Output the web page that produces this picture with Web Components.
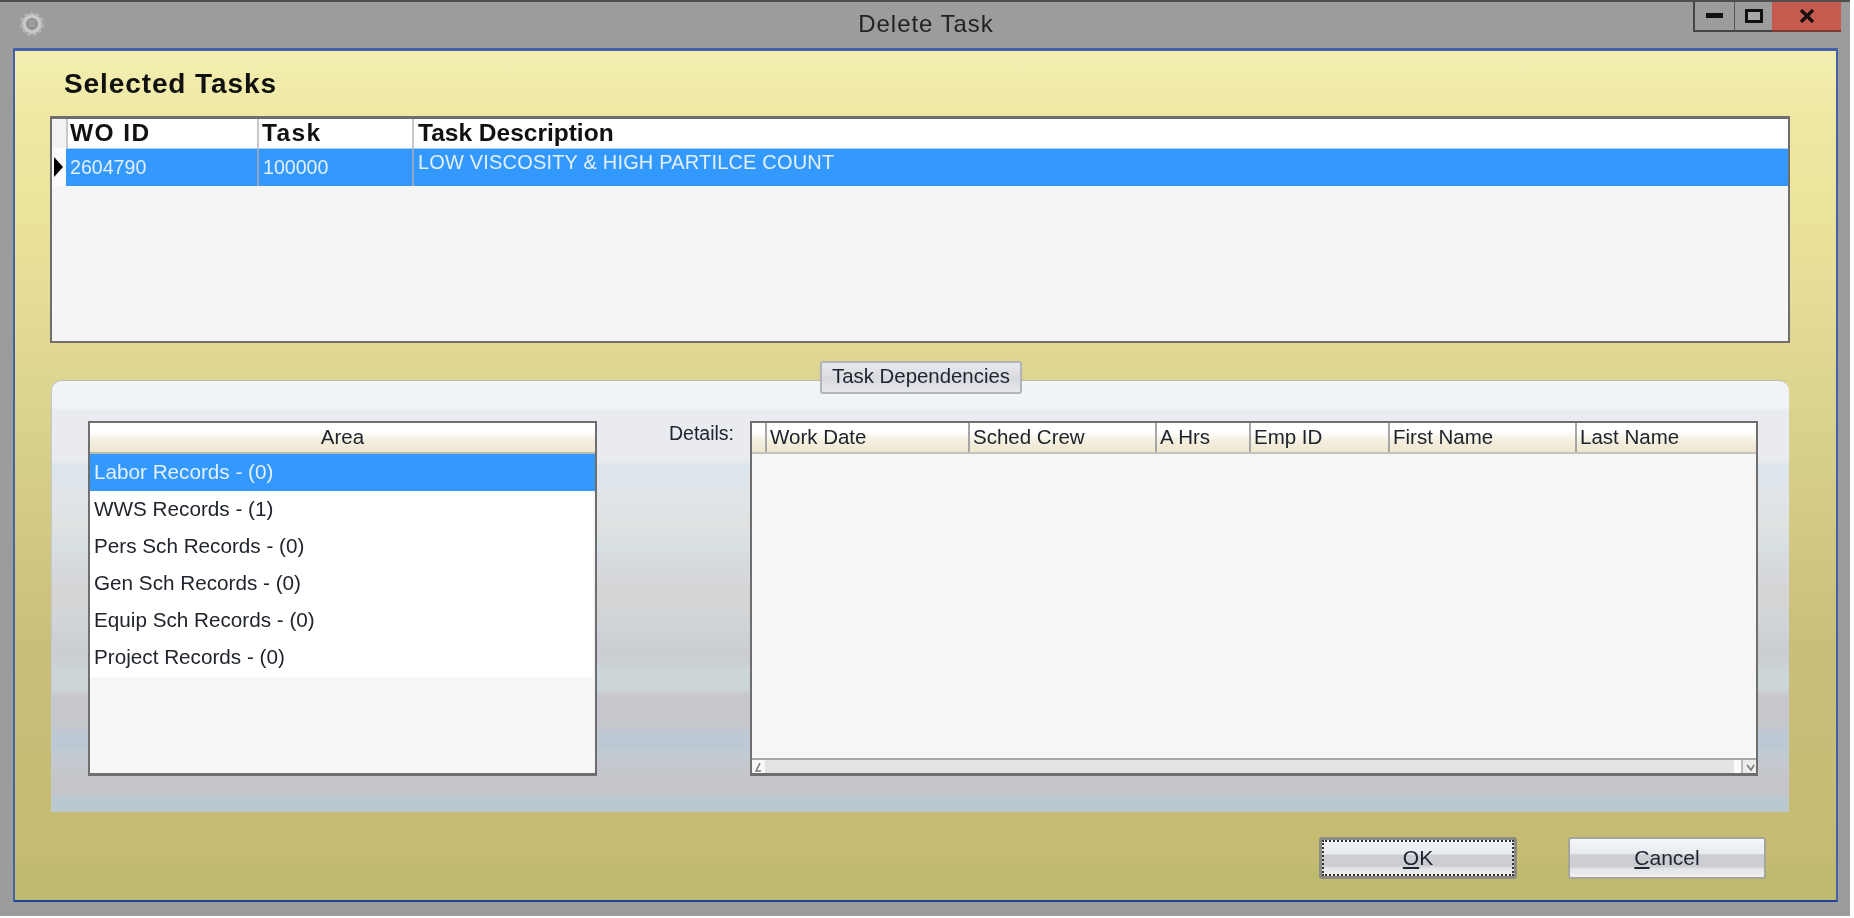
<!DOCTYPE html>
<html>
<head>
<meta charset="utf-8">
<title>Delete Task</title>
<style>
  html, body { margin: 0; height: 100%; background: #fff; overflow: hidden; }
  body { font-family: "Liberation Sans", Arial, sans-serif; }
</style>
</head>
<body>

<win-dialog caption="Delete Task">
  <section-title>Selected Tasks</section-title>
  <tasks-grid></tasks-grid>
  <dep-group label="Task Dependencies">
    <area-list></area-list>
    <details-grid></details-grid>
  </dep-group>
  <button-row>
    <win-button focused><u>O</u>K</win-button>
    <win-button><u>C</u>ancel</win-button>
  </button-row>
</win-dialog>

<script>
// window chrome: caption bar + the yellow client area
class WinDialog extends HTMLElement {
  constructor() {
    super();
    const r = this.attachShadow({ mode: 'open' });
    r.innerHTML = `<style>
      :host { display: flex; flex-direction: column; width: 1850px; height: 916px; box-sizing: border-box;
        background: #9c9c9c; border-top: 2px solid #4e4e4e; filter: blur(.45px); }
      .bar { height: 46px; display: flex; align-items: flex-start; position: relative; flex: none; }
      .icon { margin: 9px 0 0 19px; width: 26px; height: 26px; }
      .title { position: absolute; left: 0; right: 0; top: 9px; text-align: center; padding-left: 2px;
        font-size: 24px; letter-spacing: .95px; line-height: 26px; color: #222; }
      .ctl { margin-left: auto; margin-right: 9px; display: flex; height: 30px; }
      .ctl div { display: flex; align-items: center; justify-content: center; box-sizing: border-box; height: 30px; }
      .min { width: 42px; border-left: 2px solid #444; border-bottom: 2px solid #444; border-right: 1px solid #555; }
      .max { width: 37px; border-bottom: 2px solid #444; }
      .cls { width: 69px; background: #c65a4e; border-bottom: 2px solid #7c3a32; }
      .client { flex: 1; margin: 0 12px 14px 13px; border: 2px solid #4761a6; border-top-width: 3px;
        border-bottom-color: #24409a; display: flex; flex-direction: column; min-height: 0;
        background: linear-gradient(#f2efb1 0, #efe7a2 9%, #ede49b 18%, #dfd592 38%, #d7cd8a 50%, #c9bf79 70%, #c7bd76 82%, #c5bb72 95.8%, #bebb6f 96%, #bebb6f 100%); }
    </style>
    <div class="bar">
      <svg class="icon" viewBox="0 0 26 26">
        <circle cx="13" cy="13" r="8" fill="none" stroke="#c9c9c9" stroke-width="4"/>
        <circle cx="13" cy="13" r="10.5" fill="none" stroke="#b4b4b4" stroke-width="3" stroke-dasharray="3.5 2.4"/>
        <circle cx="13" cy="13" r="5" fill="#9c9c9c" stroke="#858585" stroke-width="1"/>
      </svg>
      <div class="title"></div>
      <div class="ctl">
        <div class="min"><svg width="18" height="6"><rect y="0" width="17" height="5" fill="#111"/></svg></div>
        <div class="max"><svg width="18" height="14"><rect x="1.5" y="1.5" width="15" height="11" fill="#a8a8a8" stroke="#111" stroke-width="3"/></svg></div>
        <div class="cls"><svg width="16" height="14" viewBox="0 0 16 14"><path d="M2 1 L14 13 M14 1 L2 13" stroke="#1a1010" stroke-width="3.4" fill="none"/></svg></div>
      </div>
    </div>
    <div class="client"><slot></slot></div>`;
    r.querySelector('.title').textContent = this.getAttribute('caption') || '';
  }
}

class SectionTitle extends HTMLElement {
  constructor() {
    super();
    this.attachShadow({ mode: 'open' }).innerHTML = `<style>
      :host { display: block; height: 65px; box-sizing: border-box; padding: 18px 0 0 49px;
        font-size: 28px; font-weight: bold; line-height: 30px; letter-spacing: .9px; color: #111; }
    </style><slot></slot>`;
  }
}

// top table with the one selected row
class TasksGrid extends HTMLElement {
  constructor() {
    super();
    this.attachShadow({ mode: 'open' }).innerHTML = `<style>
      :host { display: block; margin: 0 46px 37px 35px; height: 227px; box-sizing: border-box;
        border: 2px solid #6e6e6e; border-top-width: 3px; background: #f5f5f5; color: #111; }
      .row { display: grid; grid-template-columns: 14px 191px 155px 1fr; }
      .head { height: 29px; background: #fff; font-size: 24.5px; font-weight: bold; line-height: 28px; }
      .head div { padding-left: 3px; border-left: 2px solid #c8c8c8; box-sizing: border-box; white-space: nowrap; }
      .head div:first-child { background: #f2f2f2; border: 0; padding: 0; }
      .head .wo { letter-spacing: 1.4px; padding-left: 2px; }
      .head .tk { letter-spacing: 1.4px; }
      .head .ds { padding-left: 4px; }
      .sel { height: 38px; font-size: 19.6px; color: #e4f0ff; }
      .sel div { background: #3399ff; border-left: 2px solid #8fa9c4; box-sizing: border-box; padding: 6px 0 0 4px; line-height: 24px; white-space: nowrap; border-top: 1px solid #a8d0f8; }
      .sel div.rh { background: #fbfbfb; border: 0; padding: 0 0 0 1px; display: flex; align-items: center; }
      .sel div:nth-child(2) { border-left: 0; }
      .sel div.desc { font-size: 20px; padding-top: 1px; line-height: 25px; letter-spacing: .18px; }
      svg { display: block; }
    </style>
    <div class="row head"><div></div><div class="wo">WO ID</div><div class="tk">Task</div><div class="ds">Task Description</div></div>
    <div class="row sel">
      <div class="rh"><svg width="11" height="20"><path d="M1 0 L10 10 L1 20 Z" fill="#000"/></svg></div>
      <div>2604790</div><div>100000</div><div class="desc">LOW VISCOSITY &amp; HIGH PARTILCE COUNT</div>
    </div>`;
  }
}

// light rounded panel, the label sits over its top edge
class DepGroup extends HTMLElement {
  constructor() {
    super();
    const r = this.attachShadow({ mode: 'open' });
    r.innerHTML = `<style>
      :host { display: flex; position: relative; margin: 0 47px 0 36px; height: 432px; box-sizing: border-box;
        padding: 40px 31px 36px 36px; justify-content: space-between; border-radius: 10px 10px 0 0;
        border-top: 1px solid #b9bcae; border-left: 1px solid #c2c9c8;
        background: linear-gradient(#f1f5f8 0, #f0f3f7 6%, #e9ebf0 7%, #e9ebf0 18%, #dce5ec 20%, #dfe6eb 24%, #e0e5e9 27%, #e0e2e2 33%, #d8dfe3 38%, #d5d8dd 44%, #d6d4d3 51%, #cfd5d9 56%, #cbcdd2 62%, #cbced3 65%, #ccd5d8 67%, #ccd5d8 71.5%, #c6c8ce 73%, #c6c8ce 80%, #bcc9d5 82%, #bcc9d5 85%, #c3cbd2 87%, #c5c6cb 91%, #c5c6cb 96%, #bac8d0 96.5%, #bac8d0 100%); }
      .lbl { position: absolute; left: 768px; top: -20px; width: 202px; height: 33px; box-sizing: border-box;
        border: 2px solid #b1b4bb; border-radius: 3px; text-align: center; font-size: 20.4px; line-height: 27px;
        background: linear-gradient(#e8eaef, #d8dade 55%, #e6e7e9); color: #1c2430; }
    </style><div class="lbl"></div><slot></slot>`;
    r.querySelector('.lbl').textContent = this.getAttribute('label');
  }
}

class AreaList extends HTMLElement {
  constructor() {
    super();
    const rows = ['Labor Records - (0)', 'WWS Records - (1)', 'Pers Sch Records - (0)',
      'Gen Sch Records - (0)', 'Equip Sch Records - (0)', 'Project Records - (0)'];
    this.attachShadow({ mode: 'open' }).innerHTML = `<style>
      :host { display: block; width: 509px; flex: none; box-sizing: border-box; border: 2px solid #6e6e6e;
        border-bottom-width: 3px; background: #f6f6f6; color: #20242c; }
      .hd { height: 31px; box-sizing: border-box; text-align: center; font-size: 20.5px; line-height: 27px;
        background: linear-gradient(#fff 0, #fff 30%, #f4efe0 60%, #efe6cf 100%); border-bottom: 2px solid #b8b8b0; }
      .rw { height: 37.1px; padding-left: 4px; font-size: 20.7px; line-height: 36px; background: #fff; margin-right: 2px; }
      .rw.on { background: #3399ff; color: #e4f0ff; margin-right: 0; }
    </style><div class="hd">Area</div>` +
      rows.map((t, i) => `<div class="rw${i === 0 ? ' on' : ''}">${t}</div>`).join('');
  }
}

// "Details:" label + empty grid with its scrollbar
class DetailsGrid extends HTMLElement {
  constructor() {
    super();
    const cols = [['Work Date', 203], ['Sched Crew', 187], ['A Hrs', 94], ['Emp ID', 139], ['First Name', 187], ['Last Name', 180]];
    this.attachShadow({ mode: 'open' }).innerHTML = `<style>
      :host { display: flex; width: 1090px; flex: none; color: #20242c; }
      .cap { width: 82px; flex: none; box-sizing: border-box; padding-left: 1px; font-size: 19.5px; line-height: 24px; margin-top: 0; }
      .box { flex: 1; display: flex; flex-direction: column; box-sizing: border-box; border: 2px solid #6e6e6e;
        border-bottom-width: 3px; background: #f6f6f6; }
      .hd { display: flex; height: 31px; flex: none; box-sizing: border-box; border-bottom: 2px solid #c4c4bc;
        background: linear-gradient(#fff 0, #fff 30%, #f4efe0 60%, #efe6cf 100%); }
      .hd div { box-sizing: border-box; padding-left: 3px; border-left: 2px solid #a6a6a6; font-size: 20.5px; line-height: 27px; white-space: nowrap; }
      .hd .rh { width: 13px; border: 0; padding: 0; flex: none; }
      .fill { flex: 1; }
      .sb { display: flex; height: 13px; flex: none; background: #e2e2e2; border-top: 2px solid #a8a8a8; }
      .sb i { display: block; background: #f6f6f6; }
      .sb .t { flex: 1; background: #e4e4e4; }
      .sb svg { display: block; flex: none; }
    </style>
    <div class="cap">Details:</div>
    <div class="box">
      <div class="hd"><div class="rh"></div>${cols.map(c => `<div style="width:${c[1]}px">${c[0]}</div>`).join('')}</div>
      <div class="fill"></div>
      <div class="sb">
        <svg width="13" height="13"><rect width="13" height="13" fill="#f8f8f8"/><path d="M8 3 L4 11 L9 11" stroke="#777" stroke-width="1.5" fill="none"/></svg>
        <i class="t"></i>
        <i style="width:7px;background:#fbfbfb"></i><i style="width:2px;background:#bbb"></i>
        <svg width="13" height="13"><rect width="13" height="13" fill="#ececec"/><path d="M4 5 L8 10 L11 5" stroke="#777" stroke-width="1.5" fill="none"/></svg>
      </div>
    </div>`;
  }
}

class ButtonRow extends HTMLElement {
  constructor() {
    super();
    this.attachShadow({ mode: 'open' }).innerHTML = `<style>
      :host { display: flex; justify-content: flex-end; gap: 51px; padding: 25px 70px 0 0; }
    </style><slot></slot>`;
  }
}

class WinButton extends HTMLElement {
  constructor() {
    super();
    this.attachShadow({ mode: 'open' }).innerHTML = `<style>
      :host { display: flex; align-items: center; justify-content: center; width: 198px; height: 42px; box-sizing: border-box;
        position: relative; border: 2px solid #a5a59a; border-radius: 3px; font-size: 21px; color: #1c2430;
        background: linear-gradient(#f4f6f8 0, #e8ebef 38%, #cdced3 42%, #cccdd1 72%, #e2e3e6 78%, #f0f0f2 100%); }
      :host([focused]) { border: 3px solid #8c8c84; }
      :host([focused])::after { content: ""; position: absolute; inset: 0; border: 2px dotted #333; }
    </style><slot></slot>`;
  }
}

customElements.define('win-dialog', WinDialog);
customElements.define('section-title', SectionTitle);
customElements.define('tasks-grid', TasksGrid);
customElements.define('dep-group', DepGroup);
customElements.define('area-list', AreaList);
customElements.define('details-grid', DetailsGrid);
customElements.define('button-row', ButtonRow);
customElements.define('win-button', WinButton);
</script>
</body>
</html>
